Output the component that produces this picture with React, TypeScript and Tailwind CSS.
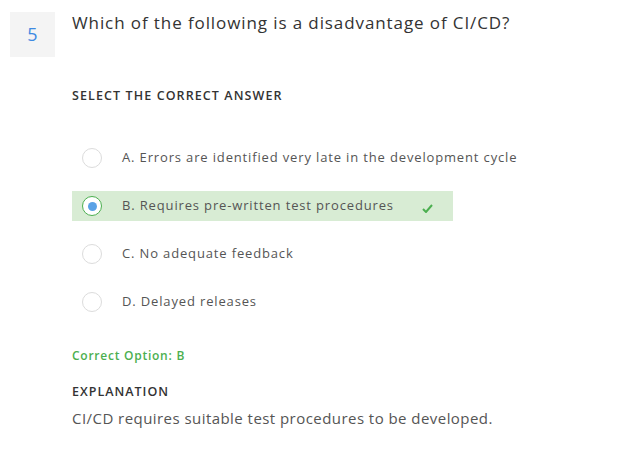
import React from "react";

const options = [
  { key: "A", text: "Errors are identified very late in the development cycle" },
  { key: "B", text: "Requires pre-written test procedures" },
  { key: "C", text: "No adequate feedback" },
  { key: "D", text: "Delayed releases" },
];

const correct = "B";

const Radio = ({ checked }: { checked: boolean }) => (
  <span
    className={
      "flex h-5 w-5 shrink-0 items-center justify-center rounded-full border bg-white " +
      (checked ? "border-[#4caf50]" : "border-[#dcdcdc]")
    }
  >
    {checked && <span className="h-[9px] w-[9px] rounded-full bg-[#5aa2e6]" />}
  </span>
);

export default function App() {
  return (
    <div className="min-h-screen bg-white font-['Open_Sans',sans-serif] text-[#333]">
      <div className="flex gap-[17px] pl-[10px] pt-[12px]">
        <div className="flex h-[45px] w-[45px] shrink-0 items-center justify-center bg-[#f4f4f4] text-[18px] text-[#3f8ae2]">
          5
        </div>
        <div className="flex-1">
          <h2 className="text-[17px] leading-[22px] tracking-[0.9px] text-[#333]">
            Which of the following is a disadvantage of CI/CD?
          </h2>

          <div className="mt-[53px] text-[12.5px] font-semibold uppercase leading-[18px] tracking-[1.1px] text-[#333]">
            Select the correct answer
          </div>

          <div className="mt-[38px] flex flex-col gap-[18px]">
            {options.map((o) => {
              const isCorrect = o.key === correct;
              return (
                <div
                  key={o.key}
                  className={
                    "flex h-[30px] w-[381px] items-center whitespace-nowrap pl-[10px] " +
                    (isCorrect ? "bg-[#d8ecd4]" : "")
                  }
                >
                  <Radio checked={isCorrect} />
                  <span className="ml-[20px] text-[13px] tracking-[0.85px] text-[#555]">
                    {o.key}. {o.text}
                  </span>
                  {isCorrect && (
                    <svg
                      className="ml-[28px] mt-[5px]"
                      width="11"
                      height="9"
                      viewBox="0 0 11 9"
                      fill="none"
                    >
                      <path
                        d="M1 5 L4 8 L10 1"
                        stroke="#4caf50"
                        strokeWidth="2"
                      />
                    </svg>
                  )}
                </div>
              );
            })}
          </div>

          <div className="mt-[30px] text-[12px] font-semibold leading-[18px] tracking-[0.75px] text-[#4caf50]">
            Correct Option: B
          </div>

          <div className="mt-[18px] text-[12.5px] font-semibold uppercase leading-[18px] tracking-[1px] text-[#333]">
            Explanation
          </div>
          <p className="mt-[6px] text-[15px] leading-[22px] tracking-[0.45px] text-[#555]">
            CI/CD requires suitable test procedures to be developed.
          </p>
        </div>
      </div>
    </div>
  );
}
